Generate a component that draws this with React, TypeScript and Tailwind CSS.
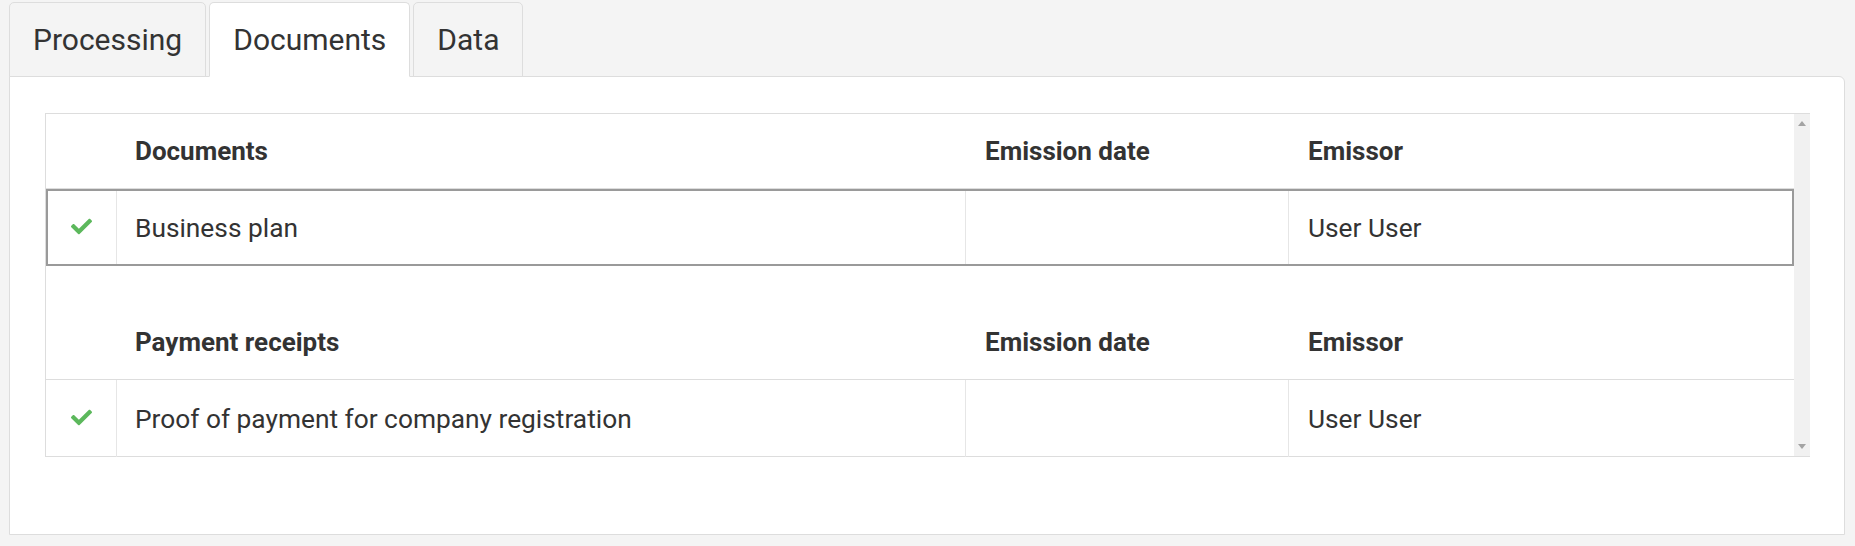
import { FaCheck } from 'react-icons/fa';

const tabs = ['Processing', 'Documents', 'Data'];
const active = 'Documents';

const cols = 'grid grid-cols-[70px_849px_323px_1fr]';

function HeaderRow({ title }: { title: string }) {
  return (
    <div className={`${cols} h-[75px] items-center border-b border-[#dddddd] font-bold`}>
      <div />
      <div className="pl-[19px]">{title}</div>
      <div className="pl-[20px]">Emission date</div>
      <div className="pl-[20px]">Emissor</div>
    </div>
  );
}

function BodyRow({ name, selected }: { name: string; selected?: boolean }) {
  return (
    <div
      className={`${cols} h-[77px] text-[26.3px] ${
        selected ? 'outline-2 outline-[#9a9a9a] -outline-offset-2' : ''
      }`}
    >
      <div className="flex items-center justify-center pl-[1px] pb-[3px] text-[#5cb85c]">
        <FaCheck size={21} />
      </div>
      <div className="flex items-center border-l border-[#e6e6e6] pl-[18px] pt-[3px]">{name}</div>
      <div className="border-l border-[#e6e6e6]" />
      <div className="flex items-center border-l border-[#e6e6e6] pl-[19px] pt-[3px]">User User</div>
    </div>
  );
}

export default function App() {
  return (
    <div
      className="h-[546px] w-full bg-[#f4f4f4] pt-[2px] pl-[9px] pr-[10px] text-[#333333]"
      style={{ fontFamily: 'Roboto, "Noto Sans", sans-serif' }}
    >
      {/* Tabs */}
      <div className="relative z-10 flex gap-[3px]">
        {tabs.map(t => (
          <div
            key={t}
            className={`flex h-[75px] items-center rounded-t-[5px] border border-[#dddddd] px-[23px] text-[30px] ${
              t === active ? 'border-b-white bg-white' : 'bg-[#f4f4f4]'
            }`}
          >
            {t}
          </div>
        ))}
      </div>

      {/* Panel */}
      <div className="-mt-px h-[459px] rounded-tr-[6px] border border-[#dddddd] bg-white pt-[36px] pl-[35px] pr-[34px]">
        <div className="flex h-[344px] border-y border-l border-[#dddddd] text-[26px]">
          <div className="flex-1">
            <HeaderRow title="Documents" />
            <BodyRow name="Business plan" selected />
            <div className="h-[39px]" />
            <HeaderRow title="Payment receipts" />
            <BodyRow name="Proof of payment for company registration" />
          </div>

          {/* Scrollbar */}
          <div className="flex w-[16px] flex-col items-center justify-between bg-[#f1f1f1] py-[7px]">
            <svg width="8" height="5" viewBox="0 0 8 5">
              <path d="M0 5 L4 0 L8 5 Z" fill="#a3a3a3" />
            </svg>
            <svg width="8" height="5" viewBox="0 0 8 5">
              <path d="M0 0 L8 0 L4 5 Z" fill="#a3a3a3" />
            </svg>
          </div>
        </div>
      </div>
    </div>
  );
}
